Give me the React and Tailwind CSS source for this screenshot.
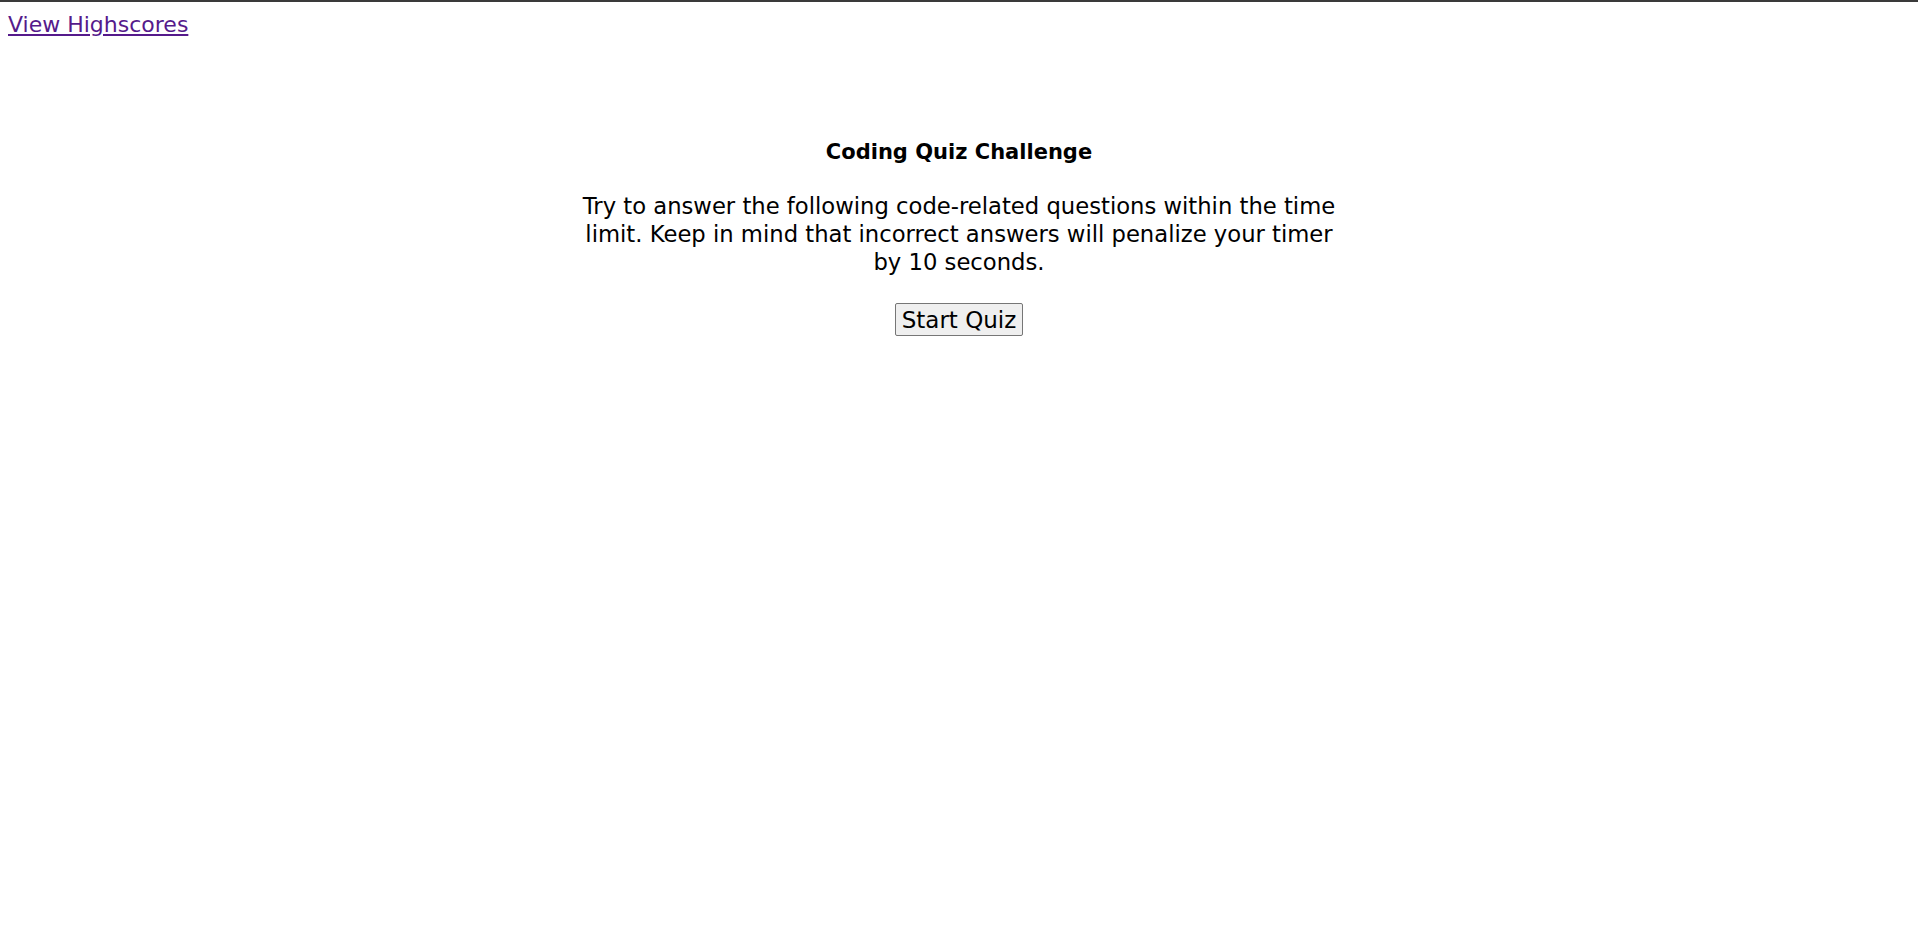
import React from 'react';

export default function App() {
  return (
    <div className="min-h-screen bg-white border-t-2 border-[#3a3a3a] text-black font-['DejaVu_Sans',sans-serif]">
      {/* Header */}
      <header className="px-2 pt-[9px]">
        <a href="#" className="text-[22px] leading-[28px] text-[#551a8b] underline">View Highscores</a>
      </header>

      {/* Intro */}
      <main className="mx-auto w-[780px] mt-[99px] flex flex-col items-center text-center">
        <h1 className="text-[21px] leading-[28px] font-bold">Coding Quiz Challenge</h1>
        <p className="mt-[26px] text-[22.7px] leading-[28px]">
          Try to answer the following code-related questions within the time limit. Keep in mind that incorrect answers will penalize your timer by 10 seconds.
        </p>
        <button className="mt-[27px] px-[6px] h-[33px] text-[23px] leading-[28px] bg-[#efefef] border border-[#767676] rounded-[2px]">
          Start Quiz
        </button>
      </main>
    </div>
  );
}
